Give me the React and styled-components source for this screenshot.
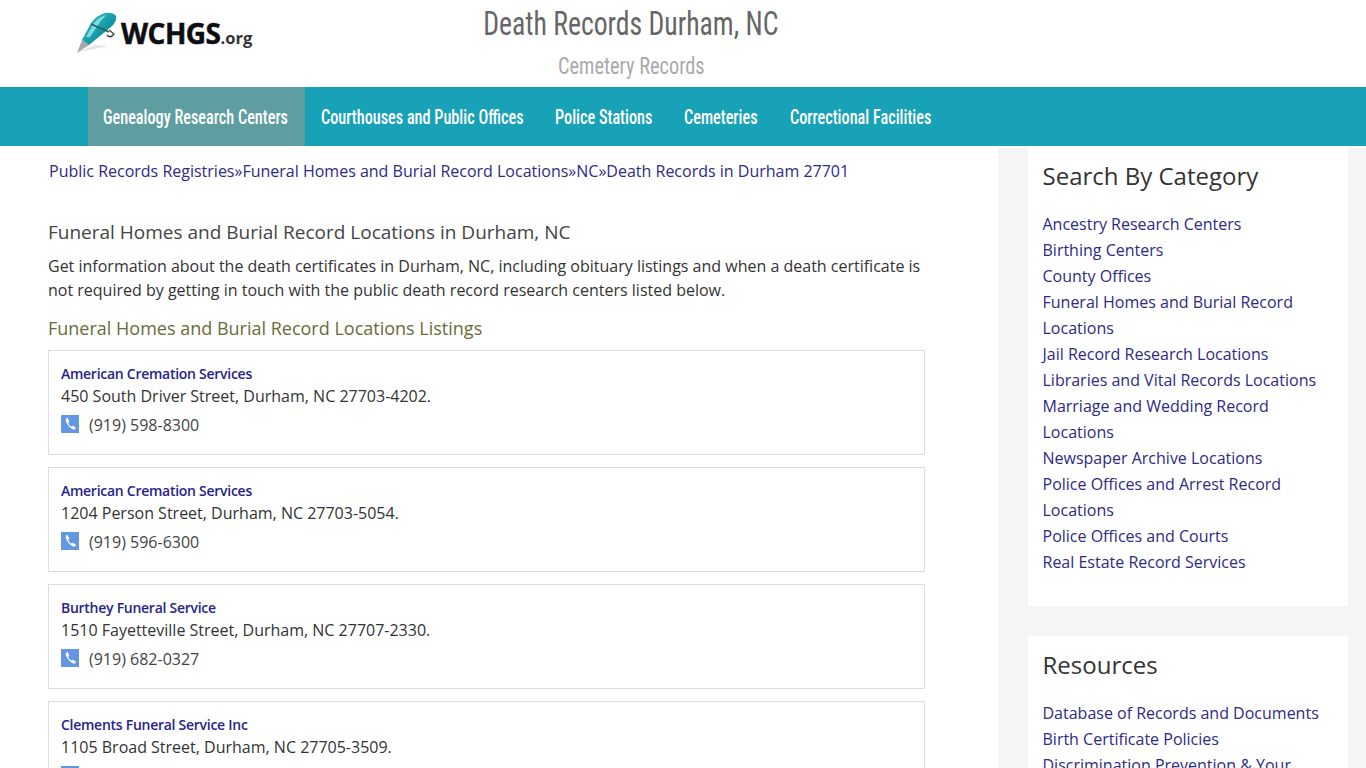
import styled, { createGlobalStyle } from 'styled-components';

const Global = createGlobalStyle`
    html, body { margin: 0; padding: 0; height: 768px; overflow: hidden; background: #fff; }
    body { font-family: "Open Sans", sans-serif; color: #333; }
    * { box-sizing: border-box; }
`;

const listings = [
    { name: 'American Cremation Services', address: '450 South Driver Street, Durham, NC 27703-4202.', phone: '(919) 598-8300' },
    { name: 'American Cremation Services', address: '1204 Person Street, Durham, NC 27703-5054.', phone: '(919) 596-6300' },
    { name: 'Burthey Funeral Service', address: '1510 Fayetteville Street, Durham, NC 27707-2330.', phone: '(919) 682-0327' },
    { name: 'Clements Funeral Service Inc', address: '1105 Broad Street, Durham, NC 27705-3509.', phone: '(919) 682-5456' },
];

const categories = [
    'Ancestry Research Centers', 'Birthing Centers', 'County Offices',
    'Funeral Homes and Burial Record Locations', 'Jail Record Research Locations',
    'Libraries and Vital Records Locations', 'Marriage and Wedding Record Locations',
    'Newspaper Archive Locations', 'Police Offices and Arrest Record Locations',
    'Police Offices and Courts', 'Real Estate Record Services',
];

const resources = [
    'Database of Records and Documents', 'Birth Certificate Policies', 'Discrimination Prevention & Your Rights',
];

// widths are fixed because the labels are squeezed with scaleX to look like the condensed webfont
const navItems = [
    { label: 'Genealogy Research Centers', width: 217 },
    { label: 'Courthouses and Public Offices', width: 234 },
    { label: 'Police Stations', width: 129 },
    { label: 'Cemeteries', width: 106 },
    { label: 'Correctional Facilities', width: 175 },
];

function Logo() {
    return (
        <LogoWrap>
            <svg width="44" height="42" viewBox="0 0 44 42">
                <defs>
                    <linearGradient id="penBody" x1="0" y1="0" x2="1" y2="1">
                        <stop offset="0" stopColor="#45c3c9" />
                        <stop offset="0.55" stopColor="#159aa6" />
                        <stop offset="1" stopColor="#0b6f7c" />
                    </linearGradient>
                </defs>
                <path d="M3 40 L20 33 L34 34 L14 38 Z" fill="#e4e4e4" />
                <path d="M2 41 L7 28 L14 33 Z" fill="#a5a9ac" />
                <path d="M7 28 L16 11 Q22 3 30 1 Q38 0 41 4 Q42 9 37 14 L14 33 Z" fill="url(#penBody)" />
                <path d="M11 25 L19 11 Q24 5 31 3 L25 10 L15 25 Z" fill="#7fdde0" />
                <path d="M16 12 L34 20" stroke="#2e5a62" strokeWidth="1.6" />
                <path d="M34 18 L39 22 Q35 27 32 23" stroke="#444" strokeWidth="1.4" fill="none" />
            </svg>
            <LogoName>WCHGS</LogoName>
            <LogoTld>.org</LogoTld>
        </LogoWrap>
    );
}

function PhoneBadge() {
    return (
        <PhoneBox>
            <svg width="13" height="13" viewBox="0 0 24 24">
                <path fill="#fff" d="M6.6 1.8 L9.6 7.6 C9.9 8.2 9.8 8.8 9.3 9.2 L7.6 10.7 C8.6 13.5 10.4 16 13 17.8 L15 16.3 C15.5 15.9 16.1 15.9 16.6 16.2 L21.6 19.5 C22.2 19.9 22.3 20.7 21.8 21.2 L20 22.8 C19.2 23.4 18 23.5 17 23 C9.5 19.6 4.6 13.6 3 6.2 C2.8 5 3.2 3.9 4.1 3 L5.3 1.7 C5.7 1.3 6.3 1.3 6.6 1.8 Z" />
            </svg>
        </PhoneBox>
    );
}

function App() {
    return (
        <>
            <Global />
            <Header>
                <Logo />
                <TitleBlock>
                    <SiteTitle>Death Records Durham, NC</SiteTitle>
                    <SiteSubtitle>Cemetery Records</SiteSubtitle>
                </TitleBlock>
            </Header>
            <Nav>
                {navItems.map((item, i) => (
                    <NavItem key={item.label} $active={i === 0} $width={item.width}>
                        <NavLabel>{item.label}</NavLabel>
                    </NavItem>
                ))}
            </Nav>
            <Body>
                <Main>
                    <Breadcrumb>
                        <a>Public Records Registries</a>»<a>Funeral Homes and Burial Record Locations</a>»<a>NC</a>»<a>Death Records in Durham 27701</a>
                    </Breadcrumb>
                    <Heading>Funeral Homes and Burial Record Locations in Durham, NC</Heading>
                    <Intro>
                        Get information about the death certificates in Durham, NC, including obituary listings and when a death certificate is not required by getting in touch with the public death record research centers listed below.
                    </Intro>
                    <ListHeading>Funeral Homes and Burial Record Locations Listings</ListHeading>
                    {listings.map((l) => (
                        <Card key={l.address}>
                            <CardName>{l.name}</CardName>
                            <CardAddress>{l.address}</CardAddress>
                            <PhoneRow>
                                <PhoneBadge />
                                <span>{l.phone}</span>
                            </PhoneRow>
                        </Card>
                    ))}
                </Main>
                <Sidebar>
                    <Widget>
                        <WidgetTitle>Search By Category</WidgetTitle>
                        {categories.map((c) => <WidgetLink key={c}>{c}</WidgetLink>)}
                    </Widget>
                    <Widget>
                        <WidgetTitle>Resources</WidgetTitle>
                        {resources.map((c) => <WidgetLink key={c}>{c}</WidgetLink>)}
                    </Widget>
                </Sidebar>
            </Body>
        </>
    );
}

const Header = styled.header`
    height: 87px;
    position: relative;
    background: #fff;
`;

const LogoWrap = styled.div`
    position: absolute;
    left: 75px;
    top: 12px;
    display: flex;
    align-items: center;
    height: 42px;
`;

const LogoName = styled.span`
    font-family: "Open Sans", sans-serif;
    font-weight: 700;
    font-size: 28px;
    letter-spacing: -0.5px;
    color: #0d0d12;
    margin-left: 2px;
    -webkit-text-stroke: 0.5px #0d0d12;
`;

const LogoTld = styled.span`
    font-family: "Open Sans", sans-serif;
    font-weight: 700;
    font-size: 16.5px;
    color: #333;
    margin-top: 9px;
`;

const TitleBlock = styled.div`
    width: 1262px;
    text-align: center;
    display: flex;
    flex-direction: column;
    align-items: center;
`;

const SiteTitle = styled.h1`
    font-family: "Roboto Condensed", "Roboto", sans-serif;
    font-weight: 400;
    font-size: 33px;
    line-height: 42px;
    margin: 3px 0 0;
    color: #666;
    white-space: nowrap;
    transform: scaleX(0.84);
`;

const SiteSubtitle = styled.h2`
    font-family: "Roboto Condensed", "Roboto", sans-serif;
    font-weight: 400;
    font-size: 24px;
    line-height: 30px;
    margin: 6px 0 0;
    color: #aaa;
    white-space: nowrap;
    transform: scaleX(0.85);
`;

const Nav = styled.nav`
    height: 59px;
    background: #17a2b8;
    display: flex;
    padding-left: 88px;
`;

const NavItem = styled.a`
    display: flex;
    align-items: center;
    width: ${(p) => p.$width}px;
    padding-left: ${(p) => (p.$active ? '15px' : '16px')};
    background: ${(p) => (p.$active ? '#5f9ea0' : 'transparent')};
    color: #fff;
`;

const NavLabel = styled.span`
    font-family: "Roboto Condensed", "Roboto", sans-serif;
    font-size: 21px;
    font-weight: 500;
    white-space: nowrap;
    transform: scaleX(0.773);
    transform-origin: left center;
`;

const Body = styled.div`
    display: flex;
    align-items: stretch;
    height: 622px;
    overflow: hidden;
`;

const Main = styled.main`
    width: 998px;
    padding: 13px 73px 0 48px;
`;

const Breadcrumb = styled.div`
    font-size: 16px;
    line-height: 24px;
    padding-left: 1px;
    color: #2e2a85;
    margin-bottom: 36px;
`;

const Heading = styled.h3`
    font-size: 19px;
    font-weight: 400;
    line-height: 26px;
    margin: 0 0 9px;
    color: #444;
`;

const Intro = styled.p`
    font-size: 16px;
    line-height: 24px;
    margin: 0 0 13px;
    color: #333;
`;

const ListHeading = styled.h4`
    font-size: 18px;
    font-weight: 400;
    line-height: 26px;
    margin: 0 0 9px;
    color: #6b6b3a;
`;

const Card = styled.div`
    height: 105px;
    border: 1px solid #ddd;
    padding: 13px 12px 0;
    margin-bottom: 12px;
`;

const CardName = styled.div`
    font-size: 14px;
    line-height: 20px;
    font-weight: 600;
    letter-spacing: -0.27px;
    color: #26238a;
`;

const CardAddress = styled.div`
    font-size: 16px;
    line-height: 24px;
    color: #333;
`;

const PhoneRow = styled.div`
    display: flex;
    align-items: center;
    gap: 10px;
    font-size: 16px;
    line-height: 24px;
    margin-top: 5px;
    color: #444;
`;

const PhoneBox = styled.span`
    width: 18px;
    height: 18px;
    background: #6496e4;
    display: flex;
    align-items: center;
    justify-content: center;
    margin-top: -3px;
`;

const Sidebar = styled.aside`
    width: 368px;
    margin-top: 2px;
    background: #f5f5f5;
    padding: 0 18px 0 30px;
`;

const Widget = styled.section`
    background: #fff;
    padding: 12px 14.5px 31px;
    margin-bottom: 30px;

    &:first-child {
        padding-top: 11px;
    }
`;

const WidgetTitle = styled.h3`
    font-size: 24px;
    font-weight: 400;
    line-height: 34px;
    margin: 0 0 18px;
    color: #333;
`;

const WidgetLink = styled.a`
    display: block;
    font-size: 16px;
    line-height: 26px;
    color: #2e2a85;
`;

export default App;
